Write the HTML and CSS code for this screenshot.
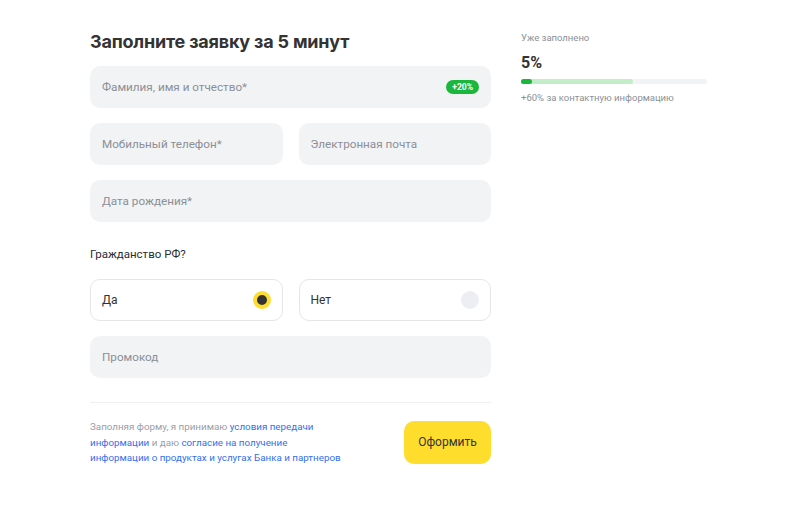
FILE: index.html
```html
<!DOCTYPE html>
<html lang="ru">
<head>
<meta charset="utf-8">
<link rel="stylesheet" href="styles.css">
</head>
<body>
<div class="page">
  <form class="form">
    <h1 class="title">Заполните заявку за 5 минут</h1>
    <div class="field">
      <span class="ph">Фамилия, имя и отчество*</span>
      <span class="badge">+20%</span>
    </div>
    <div class="row">
      <div class="field"><span class="ph">Мобильный телефон*</span></div>
      <div class="field"><span class="ph">Электронная почта</span></div>
    </div>
    <div class="field"><span class="ph">Дата рождения*</span></div>
    <div class="label">Гражданство РФ?</div>
    <div class="row">
      <div class="radio-card"><span class="rtext">Да</span><span class="radio radio-on"></span></div>
      <div class="radio-card"><span class="rtext">Нет</span><span class="radio"></span></div>
    </div>
    <div class="field"><span class="ph">Промокод</span></div>
    <div class="divider"></div>
    <div class="footer">
      <p class="legal">Заполняя форму, я принимаю <a class="link">условия передачи<br>информации</a> и даю <a class="link">согласие на получение<br>информации о продуктах и услугах Банка и партнеров</a></p>
      <button class="submit" type="button">Оформить</button>
    </div>
  </form>
  <aside class="side">
    <div class="side-label">Уже заполнено</div>
    <div class="percent">5%</div>
    <div class="bar"><div class="bar-next" style="width:60%"><div class="bar-fill" style="width:10%"></div></div></div>
    <div class="side-hint">+60% за контактную информацию</div>
  </aside>
</div>
</body>
</html>
```

FILE: styles.css
```css
* { box-sizing: border-box; }
body {
  margin: 0;
  background: #ffffff;
  font-family: "Roboto", "Noto Sans", sans-serif;
  color: #333333;
}
.page {
  display: flex;
  gap: 30px;
  padding: 30px 0 0 90px;
}
.form {
  width: 401px;
  flex: none;
  display: flex;
  flex-direction: column;
  gap: 15px;
}
.title {
  margin: 0 0 -3px 0;
  font-family: "Inter", "Roboto", sans-serif;
  font-size: 18px;
  line-height: 24px;
  font-weight: 700;
  color: #333333;
  letter-spacing: -0.2px;
}
.field {
  height: 42px;
  background: #f2f3f5;
  border-radius: 10px;
  display: flex;
  align-items: center;
  justify-content: space-between;
  padding: 0 12px;
}
.row > .field { flex: 1; }
.ph {
  font-size: 11.7px;
  color: #8b8f96;
}
.badge {
  background: #1bb73c;
  color: #ffffff;
  font-size: 8.5px;
  font-weight: 700;
  border-radius: 8px;
  padding: 2px 6px;
  line-height: 10px;
}
.row {
  display: flex;
  gap: 16px;
}
.label {
  font-size: 11.5px;
  color: #2a2d33;
  margin-top: 10px;
  margin-bottom: 3px;
  line-height: 14px;
}
.radio-card {
  flex: 1;
  height: 42px;
  border: 1px solid #e4e6ea;
  border-radius: 10px;
  display: flex;
  align-items: center;
  justify-content: space-between;
  padding: 0 11px 0 11px;
}
.rtext {
  font-size: 12px;
  color: #333;
}
.radio {
  width: 18px;
  height: 18px;
  border-radius: 50%;
  background: #eceef3;
}
.radio-on {
  background: #333333;
  border: 4.5px solid #ffdd2d;
}
.divider {
  height: 1px;
  background: #eef0f2;
  margin-top: 9px;
}
.footer {
  display: flex;
  justify-content: space-between;
  align-items: center;
  margin-top: 1px;
}
.legal {
  margin: 0;
  font-size: 9.8px;
  line-height: 15.5px;
  color: #9a9ea6;
}
.link {
  color: #336fee;
  text-decoration: none;
}
.submit {
  width: 87px;
  height: 43px;
  border: none;
  border-radius: 10px;
  background: #ffdd2d;
  font-family: inherit;
  font-size: 12px;
  color: #333;
}
.side {
  width: 186px;
  flex: none;
  padding-top: 2px;
}
.side-label {
  font-size: 9.5px;
  color: #8b8f96;
  line-height: 12px;
}
.percent {
  font-size: 16px;
  font-weight: 700;
  color: #333;
  margin-top: 9px;
  line-height: 20px;
}
.bar {
  margin-top: 6px;
  height: 5px;
  background: #f2f3f5;
  border-radius: 3px;
}
.bar-next {
  height: 100%;
  background: #c3ecc9;
  border-radius: 3px;
}
.bar-fill {
  height: 100%;
  background: #1bb73c;
  border-radius: 3px;
}
.side-hint {
  margin-top: 8px;
  font-size: 9.5px;
  color: #8b8f96;
}
```
